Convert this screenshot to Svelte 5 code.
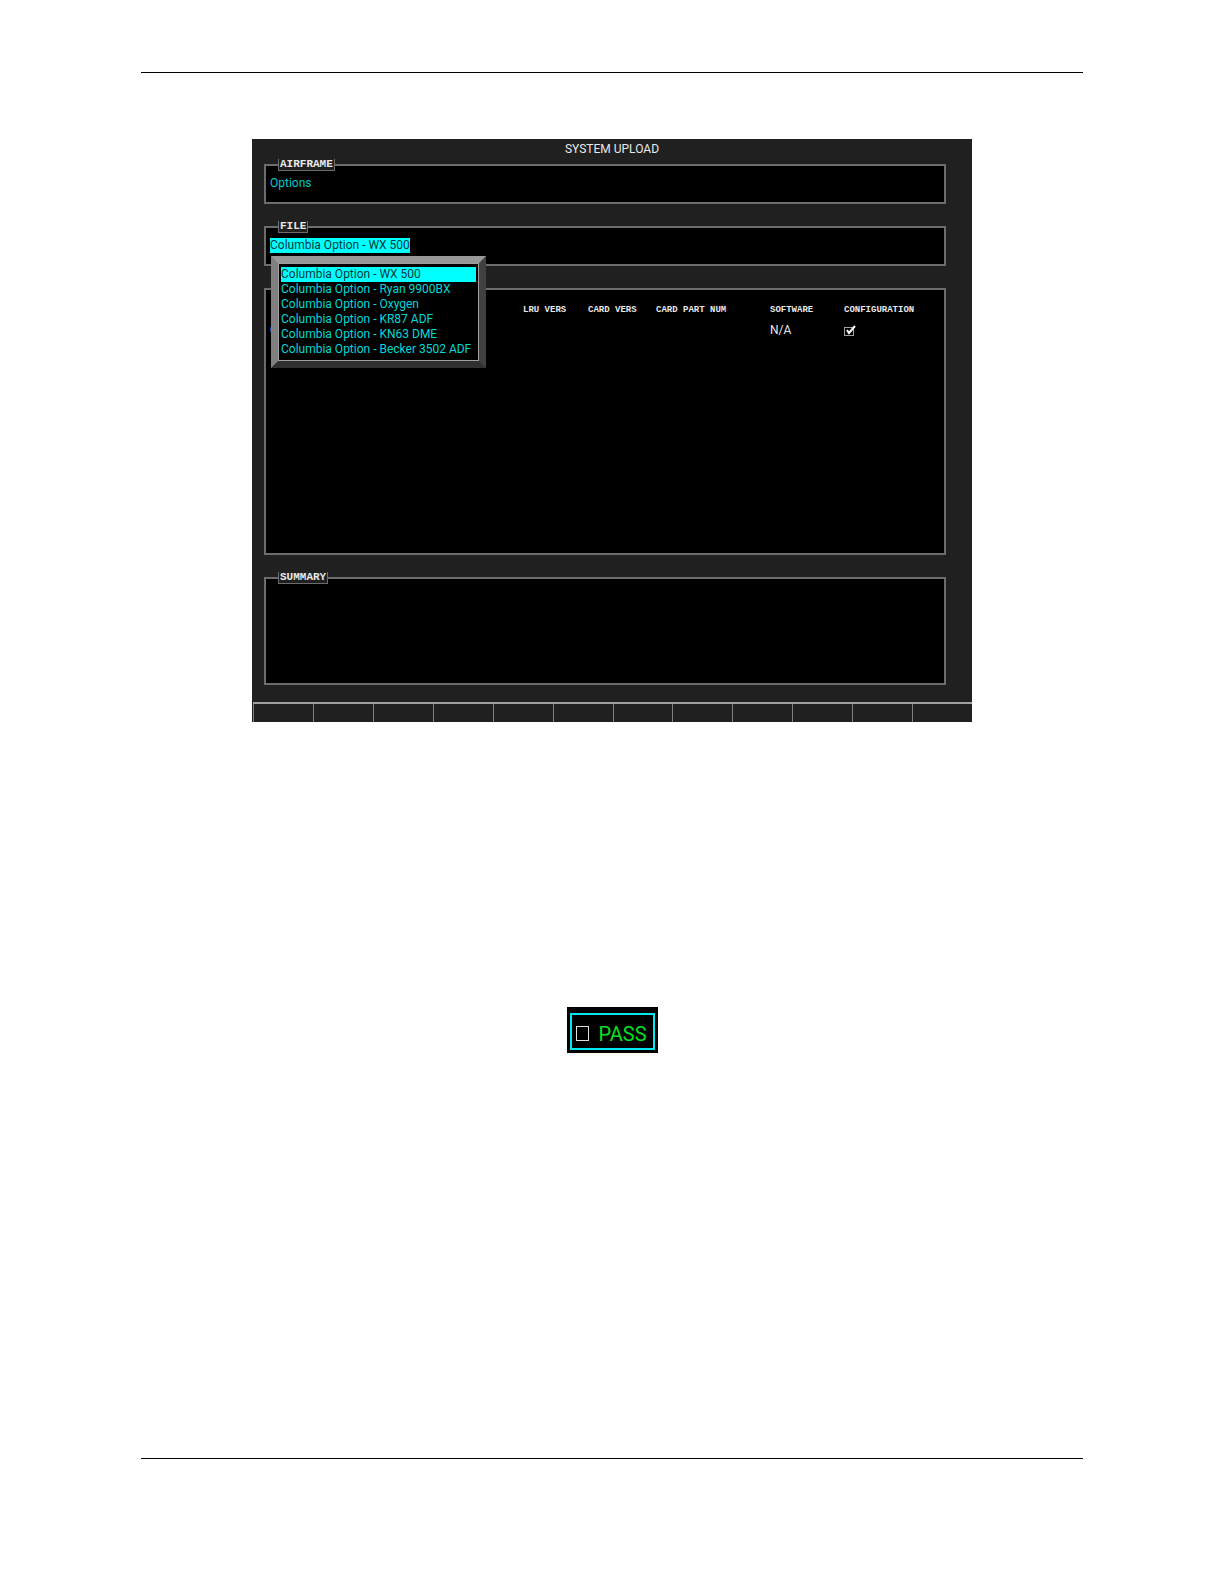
<script lang="ts">
  const files = [
    "Columbia Option - WX 500",
    "Columbia Option - Ryan 9900BX",
    "Columbia Option - Oxygen",
    "Columbia Option - KR87 ADF",
    "Columbia Option - KN63 DME",
    "Columbia Option - Becker 3502 ADF",
  ];

  const softkeys = Array(12).fill("");

  let file = $state(files[0]);
  let configured = $state(true);
  let passed = $state(false);
</script>

<div class="page">
  <hr />

  <main>
    <div class="screen">
      <h1>SYSTEM UPLOAD</h1>

      <section class="panel short">
        <h2>AIRFRAME</h2>
        <p class="value">Options</p>
      </section>

      <section class="panel short">
        <h2><label for="file">FILE</label></h2>
        <select id="file" class="field" bind:value={file}>
          {#each files as name}
            <option>{name}</option>
          {/each}
        </select>
        <div class="popup">
          <select class="list" size="6" aria-label="FILE" bind:value={file}>
            {#each files as name}
              <option>{name}</option>
            {/each}
          </select>
        </div>
      </section>

      <section class="panel items">
        <table>
          <thead>
            <tr>
              <td class="name"></td>
              <th class="lru">LRU VERS</th>
              <th class="card">CARD VERS</th>
              <th class="part">CARD PART NUM</th>
              <th class="software">SOFTWARE</th>
              <th>CONFIGURATION</th>
            </tr>
          </thead>
          <tbody>
            <tr>
              <td>C</td>
              <td></td>
              <td></td>
              <td></td>
              <td>N/A</td>
              <td>
                <label class="check">
                  <input
                    type="checkbox"
                    aria-label="CONFIGURATION"
                    bind:checked={configured}
                  />
                  {#if configured}
                    <svg viewBox="0 0 13 13" width="13" height="13">
                      <path d="M3 6 L5 9 L11 2" />
                    </svg>
                  {/if}
                </label>
              </td>
            </tr>
          </tbody>
        </table>
      </section>

      <section class="panel summary">
        <h2>SUMMARY</h2>
      </section>

      <nav class="softkeys">
        {#each softkeys as _, i}
          <button type="button" aria-label={`Softkey ${i + 1}`}></button>
        {/each}
      </nav>
    </div>

    <div class="pass">
      <label>
        <input type="checkbox" bind:checked={passed} />
        <span>PASS</span>
      </label>
    </div>
  </main>

  <hr />
</div>

<style>
  :global(body) {
    margin: 0;
    background: #fff;
  }

  .page {
    box-sizing: border-box;
    min-height: 100vh;
    display: flex;
    flex-direction: column;
    padding: 72px 141px 125px;
    font-family: Roboto, sans-serif;
  }

  hr {
    width: 100%;
    height: 1px;
    margin: 0;
    border: 0;
    background: #000;
  }

  main {
    flex: 1;
    display: flex;
    flex-direction: column;
    align-items: center;
    padding-top: 66px;
  }

  .screen {
    width: 100%;
    max-width: 720px;
    background: #202020;
    color: #e8e8e8;
  }

  h1 {
    margin: 0;
    padding: 3px 0 8px;
    font-size: 12px;
    font-weight: 400;
    line-height: 14px;
    text-align: center;
  }

  .panel {
    position: relative;
    box-sizing: border-box;
    margin: 0 26px 22px 12px;
    border: 2px solid #6c6c6c;
    background: #000;
  }

  .short {
    height: 40px;
    padding: 10px 4px;
  }

  .items {
    height: 267px;
    padding: 12px 4px;
  }

  .summary {
    height: 108px;
    margin-bottom: 17px;
  }

  /* the title sits over the top border of its panel */
  h2 {
    position: absolute;
    top: -7px;
    left: 12px;
    margin: 0;
    padding: 0 1px;
    border: solid #6c6c6c;
    border-width: 0 1px 1px;
    background: #202020;
    font-family: "Liberation Mono", monospace;
    font-size: 11px;
    font-weight: 700;
    line-height: 11px;
  }

  .value {
    margin: 0;
    color: #00c8c8;
    font-size: 12px;
    line-height: 15px;
  }

  .field,
  .list {
    appearance: none;
    display: block;
    margin: 0;
    padding: 0;
    border: 0;
    border-radius: 0;
    outline: 0;
    font-family: inherit;
    font-size: 12px;
    line-height: 15px;
  }

  .field {
    field-sizing: content;
    height: 15px;
    background: #00ffff;
    color: #003838;
  }

  .popup {
    position: absolute;
    top: 28px;
    left: 5px;
    z-index: 1;
    border: 7px solid;
    border-color: #989898 #404040 #303030 #808080;
  }

  .list {
    box-sizing: border-box;
    width: 201px;
    height: 98px;
    padding: 3px 2px;
    border: 1px solid #a0a0a0;
    background: #000;
    color: #00d8d8;
    overflow: hidden;
  }

  .list option {
    height: 15px;
    padding: 0;
  }

  .list option:checked {
    background: linear-gradient(#00ffff, #00ffff);
    color: #003838;
  }

  table {
    width: 100%;
    table-layout: fixed;
    border-collapse: collapse;
  }

  th,
  td {
    padding: 0;
    text-align: left;
    white-space: nowrap;
  }

  th {
    font-family: "Liberation Mono", monospace;
    font-size: 9px;
    line-height: 16px;
  }

  td {
    font-size: 12px;
    line-height: 24px;
  }

  .name {
    width: 253px;
  }

  .lru {
    width: 65px;
  }

  .card {
    width: 68px;
  }

  .part {
    width: 114px;
  }

  .software {
    width: 74px;
  }

  thead td {
    line-height: 16px;
  }

  .check {
    display: grid;
    width: 13px;
  }

  .check input,
  .check svg {
    grid-area: 1 / 1;
  }

  .check input {
    appearance: none;
    box-sizing: border-box;
    width: 10px;
    height: 9px;
    margin: 3px 0 0;
    border: 1px solid #a0a0a0;
  }

  .check path {
    fill: none;
    stroke: #fff;
    stroke-width: 2;
  }

  .softkeys {
    display: grid;
    grid-template-columns: repeat(12, 1fr);
    margin: 0 0 0 1px;
    border-top: 2px solid #a0a0a0;
  }

  .softkeys button {
    height: 18px;
    padding: 0;
    border: 0;
    border-left: 1px solid #808080;
    background: #202020;
  }

  .pass {
    margin-top: 285px;
    padding: 6px 3px 3px;
    background: #000;
  }

  .pass label {
    box-sizing: border-box;
    display: flex;
    align-items: center;
    gap: 10px;
    width: 85px;
    height: 37px;
    padding: 4px 4px 0;
    border: 2px solid #00e8f0;
    color: #00e020;
    font-size: 20px;
    line-height: 24px;
  }

  .pass input {
    appearance: none;
    box-sizing: border-box;
    flex: none;
    width: 13px;
    height: 15px;
    margin: 0;
    border: 1px solid #e0e0e0;
  }

  .pass input:checked {
    background: #00e020;
  }
</style>
